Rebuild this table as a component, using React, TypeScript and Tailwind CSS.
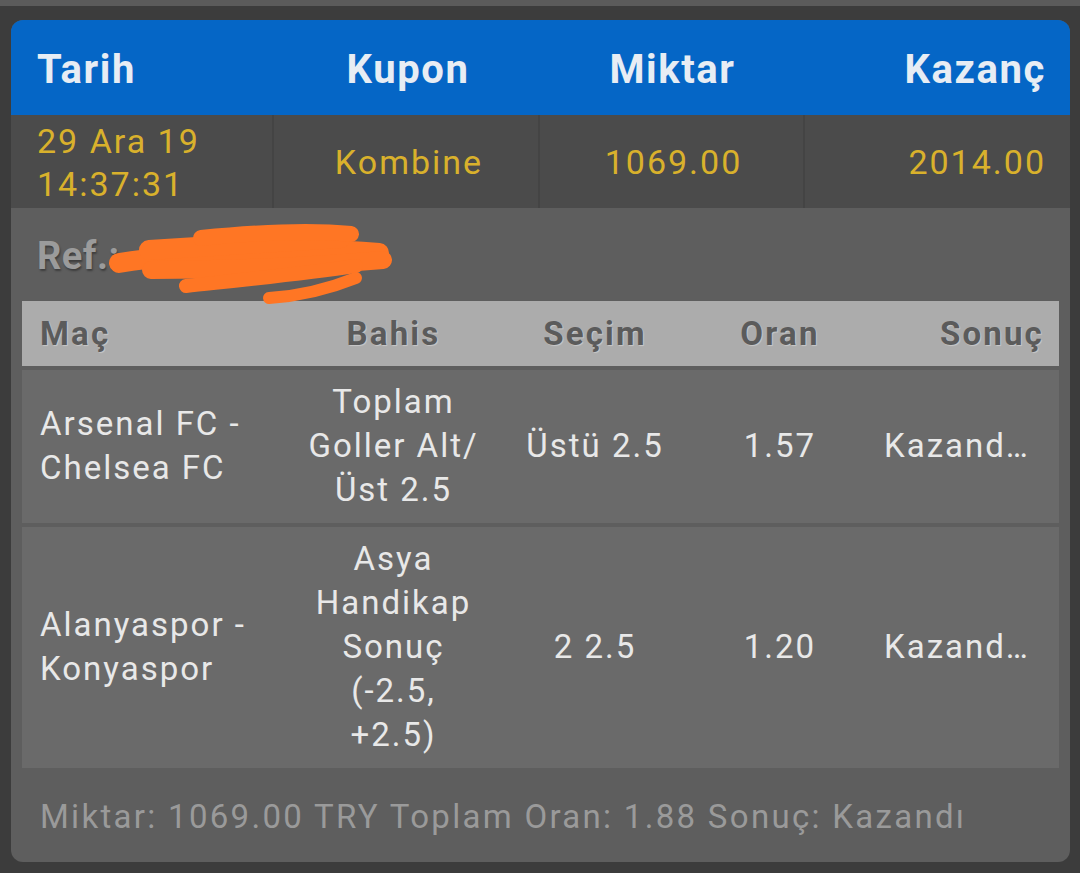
import React from 'react';

const topCols = 'grid grid-cols-[261px_266px_265px_1fr]';
const betCols = 'grid grid-cols-[268px_207px_196px_174px_1fr]';

const Scribble: React.FC = () => (
  <svg
    className="absolute left-0 top-0 z-10 pointer-events-none"
    width="420"
    height="110"
    viewBox="0 0 420 110"
    fill="none"
    stroke="#ff7624"
    strokeLinecap="round"
    strokeLinejoin="round"
  >
    <path d="M108 55 C 170 45, 290 38, 368 45" strokeWidth="20" />
    <path d="M138 42 L 330 30" strokeWidth="20" />
    <path d="M190 30 C 250 24, 300 22, 340 26" strokeWidth="16" />
    <path d="M140 62 C 220 62, 300 58, 372 52" strokeWidth="18" />
    <path d="M175 78 C 230 72, 290 66, 345 58" strokeWidth="14" />
    <path d="M258 90 C 290 88, 320 80, 345 70" strokeWidth="12" />
  </svg>
);

interface BetRow {
  match: string[];
  market: string[];
  pick: string;
  odds: string;
  result: string;
}

const rows: BetRow[] = [
  {
    match: ['Arsenal FC -', 'Chelsea FC'],
    market: ['Toplam', 'Goller Alt/', 'Üst 2.5'],
    pick: 'Üstü 2.5',
    odds: '1.57',
    result: 'Kazand…',
  },
  {
    match: ['Alanyaspor -', 'Konyaspor'],
    market: ['Asya', 'Handikap', 'Sonuç', '(-2.5,', '+2.5)'],
    pick: '2 2.5',
    odds: '1.20',
    result: 'Kazand…',
  },
];

export default function App() {
  return (
    <div className="min-h-[873px] w-[1080px] bg-[#3c3c3c] font-['Roboto',sans-serif] overflow-hidden">
      <div className="h-[6px] bg-[#5b5b5b]" />

      <div className="mx-[11px] mt-[14px] w-[1059px] rounded-[12px] bg-[#5e5e5e] overflow-hidden">
        {/* summary header */}
        <div className={`${topCols} h-[95px] bg-[#0566c6] text-[40px] font-bold tracking-[1.6px] text-[#e7edf4] items-center`}>
          <div className="pl-[26px] pt-[4px]">Tarih</div>
          <div className="text-center pt-[4px] pl-[6px]">Kupon</div>
          <div className="text-center pt-[4px] pl-[4px]">Miktar</div>
          <div className="text-right pr-[24px] pt-[4px]">Kazanç</div>
        </div>

        <div className={`${topCols} h-[93px] bg-[#4b4b4b] text-[34px] tracking-[2px] text-[#d9b12c] leading-[43px]`}>
          <div className="flex flex-col justify-center pl-[26px] pt-[2px]">
            <span>29 Ara 19</span>
            <span>14:37:31</span>
          </div>
          <div className="flex items-center justify-center border-l-2 border-[#444444] pl-[6px] pt-[2px]">Kombine</div>
          <div className="flex items-center justify-center border-l-2 border-[#444444] pl-[4px] pt-[2px]">1069.00</div>
          <div className="flex items-center justify-end border-l-2 border-[#444444] pr-[24px] pt-[2px]">2014.00</div>
        </div>

        {/* reference (number hidden under scribble) */}
        <div className="relative h-[93px] flex items-center pl-[26px] pt-[4px]">
          <span className="text-[38px] font-bold tracking-[0.5px] text-[#9b9b9b] [text-shadow:1px_2px_2px_rgba(0,0,0,0.35)]">
            Ref.:
          </span>
          <Scribble />
        </div>

        {/* selections */}
        <div className="mx-[11px]">
          <div className={`${betCols} h-[65px] bg-[#acacac] items-center text-[33px] font-bold tracking-[2.2px] text-[#5b5b5b] [text-shadow:1px_1px_1px_rgba(255,255,255,0.35)]`}>
            <div className="pl-[18px]">Maç</div>
            <div className="text-center">Bahis</div>
            <div className="text-center">Seçim</div>
            <div className="text-center">Oran</div>
            <div className="text-right pr-[15px]">Sonuç</div>
          </div>

          {rows.map((r, i) => (
            <div
              key={i}
              className={`${betCols} mt-[4px] bg-[#6a6a6a] pt-[10px] pb-[11px] text-[33px] tracking-[2px] leading-[44px] text-[#e8e8e8]`}
            >
              <div className="flex flex-col justify-center pl-[18px]">
                {r.match.map((m) => (
                  <span key={m}>{m}</span>
                ))}
              </div>
              <div className="flex flex-col justify-center items-center text-center">
                {r.market.map((m) => (
                  <span key={m}>{m}</span>
                ))}
              </div>
              <div className="flex items-center justify-center">{r.pick}</div>
              <div className="flex items-center justify-center">{r.odds}</div>
              <div className="flex items-center pl-[17px] min-w-0">
                <span className="whitespace-nowrap">{r.result}</span>
              </div>
            </div>
          ))}
        </div>

        <div className="h-[94px] flex items-center pl-[29px] pt-[4px] text-[33px] tracking-[2.3px] text-[#9a9a9a]">
          Miktar: 1069.00 TRY Toplam Oran: 1.88 Sonuç: Kazandı
        </div>
      </div>
    </div>
  );
}
